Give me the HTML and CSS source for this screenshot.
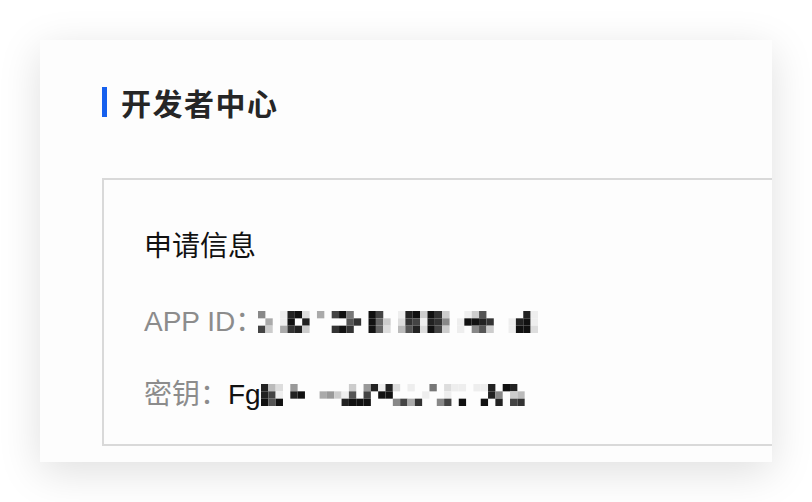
FILE: index.html
```html
<!DOCTYPE html>
<html lang="zh-CN">
<head>
<meta charset="utf-8">
<title>开发者中心</title>
<link rel="stylesheet" href="styles.css">
</head>
<body>
<div class="page">
  <div class="card">
    <div class="title">
      <span class="bar"></span>
      <h1 class="title-text">开发者中心</h1>
    </div>
    <div class="panel">
      <h2 class="panel-title">申请信息</h2>
      <div class="row">
        <span class="label">APP ID：</span>
        <svg class="mask mask-id" viewBox="0 0 38 3" preserveAspectRatio="none">
          <rect x="0" y="0" width="1" height="1" fill="#888"/><rect x="0" y="2" width="1" height="1" fill="#444"/>
          <rect x="1" y="1" width="1" height="1" fill="#aaa"/><rect x="1" y="2" width="1" height="1" fill="#ccc"/>
          <rect x="3" y="0" width="1" height="1" fill="#eee"/><rect x="3" y="1" width="1" height="1" fill="#eee"/><rect x="3" y="2" width="1" height="1" fill="#aaa"/>
          <rect x="4" y="0" width="1" height="1" fill="#222"/><rect x="4" y="1" width="1" height="1" fill="#111"/><rect x="4" y="2" width="1" height="1" fill="#333"/>
          <rect x="5" y="0" width="1" height="1" fill="#111"/><rect x="5" y="2" width="1" height="1" fill="#222"/>
          <rect x="6" y="0" width="1" height="1" fill="#ddd"/><rect x="6" y="1" width="1" height="1" fill="#222"/><rect x="6" y="2" width="1" height="1" fill="#ccc"/>
          <rect x="8" y="0" width="1" height="1" fill="#aaa"/>
          <rect x="10" y="0" width="1" height="1" fill="#444"/><rect x="10" y="2" width="1" height="1" fill="#333"/>
          <rect x="11" y="0" width="1" height="1" fill="#111"/><rect x="11" y="2" width="1" height="1" fill="#111"/>
          <rect x="12" y="0" width="1" height="1" fill="#777"/><rect x="12" y="1" width="1" height="1" fill="#555"/><rect x="12" y="2" width="1" height="1" fill="#333"/>
          <rect x="13" y="1" width="1" height="1" fill="#333"/>
          <rect x="15" y="0" width="1" height="1" fill="#111"/><rect x="15" y="1" width="1" height="1" fill="#111"/><rect x="15" y="2" width="1" height="1" fill="#111"/>
          <rect x="16" y="0" width="1" height="1" fill="#444"/><rect x="16" y="1" width="1" height="1" fill="#666"/><rect x="16" y="2" width="1" height="1" fill="#666"/>
          <rect x="17" y="1" width="1" height="1" fill="#ccc"/><rect x="17" y="2" width="1" height="1" fill="#ddd"/>
          <rect x="19" y="0" width="1" height="1" fill="#eee"/><rect x="19" y="1" width="1" height="1" fill="#ddd"/><rect x="19" y="2" width="1" height="1" fill="#bbb"/>
          <rect x="20" y="0" width="1" height="1" fill="#222"/><rect x="20" y="1" width="1" height="1" fill="#333"/><rect x="20" y="2" width="1" height="1" fill="#555"/>
          <rect x="21" y="0" width="1" height="1" fill="#111"/><rect x="21" y="1" width="1" height="1" fill="#444"/><rect x="21" y="2" width="1" height="1" fill="#222"/>
          <rect x="22" y="0" width="1" height="1" fill="#ccc"/><rect x="22" y="1" width="1" height="1" fill="#eee"/><rect x="22" y="2" width="1" height="1" fill="#ddd"/>
          <rect x="23" y="0" width="1" height="1" fill="#111"/><rect x="23" y="1" width="1" height="1" fill="#222"/><rect x="23" y="2" width="1" height="1" fill="#111"/>
          <rect x="24" y="0" width="1" height="1" fill="#333"/><rect x="24" y="1" width="1" height="1" fill="#333"/><rect x="24" y="2" width="1" height="1" fill="#444"/>
          <rect x="25" y="0" width="1" height="1" fill="#ccc"/><rect x="25" y="1" width="1" height="1" fill="#888"/><rect x="25" y="2" width="1" height="1" fill="#ccc"/>
          <rect x="27" y="1" width="1" height="1" fill="#eee"/><rect x="27" y="2" width="1" height="1" fill="#eee"/>
          <rect x="28" y="0" width="1" height="1" fill="#eee"/><rect x="28" y="1" width="1" height="1" fill="#111"/>
          <rect x="29" y="0" width="1" height="1" fill="#ccc"/><rect x="29" y="1" width="1" height="1" fill="#111"/><rect x="29" y="2" width="1" height="1" fill="#888"/>
          <rect x="30" y="0" width="1" height="1" fill="#555"/><rect x="30" y="1" width="1" height="1" fill="#222"/><rect x="30" y="2" width="1" height="1" fill="#555"/>
          <rect x="31" y="1" width="1" height="1" fill="#333"/><rect x="31" y="2" width="1" height="1" fill="#ccc"/>
          <rect x="34" y="1" width="1" height="1" fill="#eee"/><rect x="34" y="2" width="1" height="1" fill="#eee"/>
          <rect x="35" y="1" width="1" height="1" fill="#222"/><rect x="35" y="2" width="1" height="1" fill="#111"/>
          <rect x="36" y="0" width="1" height="1" fill="#222"/><rect x="36" y="1" width="1" height="1" fill="#111"/><rect x="36" y="2" width="1" height="1" fill="#111"/>
          <rect x="37" y="0" width="1" height="1" fill="#eee"/><rect x="37" y="1" width="1" height="1" fill="#eee"/><rect x="37" y="2" width="1" height="1" fill="#ddd"/>
        </svg>
      </div>
      <div class="row">
        <span class="label">密钥：</span><span class="value">Fg</span>
        <svg class="mask mask-key" viewBox="0 0 37 3" preserveAspectRatio="none">
          <rect x="0" y="0" width="1" height="1" fill="#222"/><rect x="0" y="1" width="1" height="1" fill="#222"/><rect x="0" y="2" width="1" height="1" fill="#111"/>
          <rect x="1" y="0" width="1" height="1" fill="#bbb"/><rect x="1" y="1" width="1" height="1" fill="#444"/><rect x="1" y="2" width="1" height="1" fill="#555"/>
          <rect x="2" y="0" width="1" height="1" fill="#ddd"/><rect x="2" y="1" width="1" height="1" fill="#eee"/><rect x="2" y="2" width="1" height="1" fill="#111"/>
          <rect x="4" y="0" width="1" height="1" fill="#999"/><rect x="4" y="1" width="1" height="1" fill="#222"/>
          <rect x="5" y="1" width="1" height="1" fill="#111"/>
          <rect x="8" y="1" width="1" height="1" fill="#aaa"/>
          <rect x="9" y="1" width="1" height="1" fill="#999"/>
          <rect x="10" y="1" width="1" height="1" fill="#ccc"/>
          <rect x="11" y="1" width="1" height="1" fill="#eee"/><rect x="11" y="2" width="1" height="1" fill="#222"/>
          <rect x="12" y="0" width="1" height="1" fill="#ccc"/><rect x="12" y="1" width="1" height="1" fill="#555"/><rect x="12" y="2" width="1" height="1" fill="#111"/>
          <rect x="13" y="2" width="1" height="1" fill="#111"/>
          <rect x="14" y="0" width="1" height="1" fill="#999"/><rect x="14" y="1" width="1" height="1" fill="#444"/><rect x="14" y="2" width="1" height="1" fill="#111"/>
          <rect x="15" y="0" width="1" height="1" fill="#222"/>
          <rect x="16" y="0" width="1" height="1" fill="#eee"/><rect x="16" y="1" width="1" height="1" fill="#111"/>
          <rect x="17" y="0" width="1" height="1" fill="#222"/><rect x="17" y="1" width="1" height="1" fill="#111"/>
          <rect x="18" y="0" width="1" height="1" fill="#ddd"/><rect x="18" y="2" width="1" height="1" fill="#888"/>
          <rect x="19" y="2" width="1" height="1" fill="#444"/>
          <rect x="20" y="0" width="1" height="1" fill="#eee"/><rect x="20" y="2" width="1" height="1" fill="#aaa"/>
          <rect x="21" y="2" width="1" height="1" fill="#333"/>
          <rect x="22" y="1" width="1" height="1" fill="#eee"/>
          <rect x="23" y="0" width="1" height="1" fill="#777"/>
          <rect x="24" y="2" width="1" height="1" fill="#888"/>
          <rect x="25" y="0" width="1" height="1" fill="#ddd"/><rect x="25" y="1" width="1" height="1" fill="#eee"/><rect x="25" y="2" width="1" height="1" fill="#444"/>
          <rect x="26" y="0" width="1" height="1" fill="#eee"/>
          <rect x="27" y="0" width="1" height="1" fill="#eee"/><rect x="27" y="2" width="1" height="1" fill="#111"/>
          <rect x="29" y="0" width="1" height="1" fill="#eee"/>
          <rect x="30" y="0" width="1" height="1" fill="#eee"/><rect x="30" y="2" width="1" height="1" fill="#111"/>
          <rect x="31" y="0" width="1" height="1" fill="#222"/><rect x="31" y="1" width="1" height="1" fill="#222"/>
          <rect x="32" y="1" width="1" height="1" fill="#888"/><rect x="32" y="2" width="1" height="1" fill="#222"/>
          <rect x="33" y="0" width="1" height="1" fill="#111"/>
          <rect x="34" y="0" width="1" height="1" fill="#222"/><rect x="34" y="1" width="1" height="1" fill="#ccc"/><rect x="34" y="2" width="1" height="1" fill="#444"/>
          <rect x="35" y="1" width="1" height="1" fill="#bbb"/><rect x="35" y="2" width="1" height="1" fill="#333"/>
        </svg>
      </div>
    </div>
  </div>
</div>
</body>
</html>
```

FILE: styles.css
```css
html, body {
  margin: 0;
  padding: 0;
  background: #ffffff;
}

body {
  font-family: "Liberation Sans", "Noto Sans CJK SC", sans-serif;
}

.page {
  box-sizing: border-box;
  width: 812px;
  height: 502px;
  padding: 40px;
}

.card {
  box-sizing: border-box;
  width: 732px;
  height: 422px;
  padding: 47px 0 0 62px;
  background: #fdfdfd;
  box-shadow: 0 10px 40px rgba(0, 0, 0, 0.13);
  overflow: hidden;
}

.title {
  display: flex;
  align-items: center;
  height: 30px;
}

.bar {
  width: 5px;
  height: 30px;
  background: #1660ee;
  flex: none;
}

.title-text {
  margin: 0 0 0 14px;
  font-family: "Noto Sans CJK SC", sans-serif;
  font-size: 30px;
  font-weight: 700;
  letter-spacing: 1.5px;
  line-height: 30px;
  color: #262626;
}

.panel {
  box-sizing: border-box;
  width: 720px;
  height: 268px;
  margin-top: 61px;
  padding: 44px 0 0 40px;
  border: 2px solid #d9d9d9;
}

.panel-title {
  margin: 0;
  font-family: "Noto Sans CJK SC", sans-serif;
  font-size: 28px;
  font-weight: 400;
  line-height: 40px;
  color: #111111;
}

.row {
  display: flex;
  align-items: center;
  height: 40px;
  margin-top: 38px;
  font-size: 28px;
  line-height: 40px;
}

.row + .row {
  margin-top: 33px;
}

.label {
  color: #8c8c8c;
}

.value {
  color: #111111;
}

.mask {
  display: block;
  height: 22px;
}

.mask-id {
  width: 280px;
  margin-left: -5px;
}

.mask-key {
  width: 271px;
}
```
